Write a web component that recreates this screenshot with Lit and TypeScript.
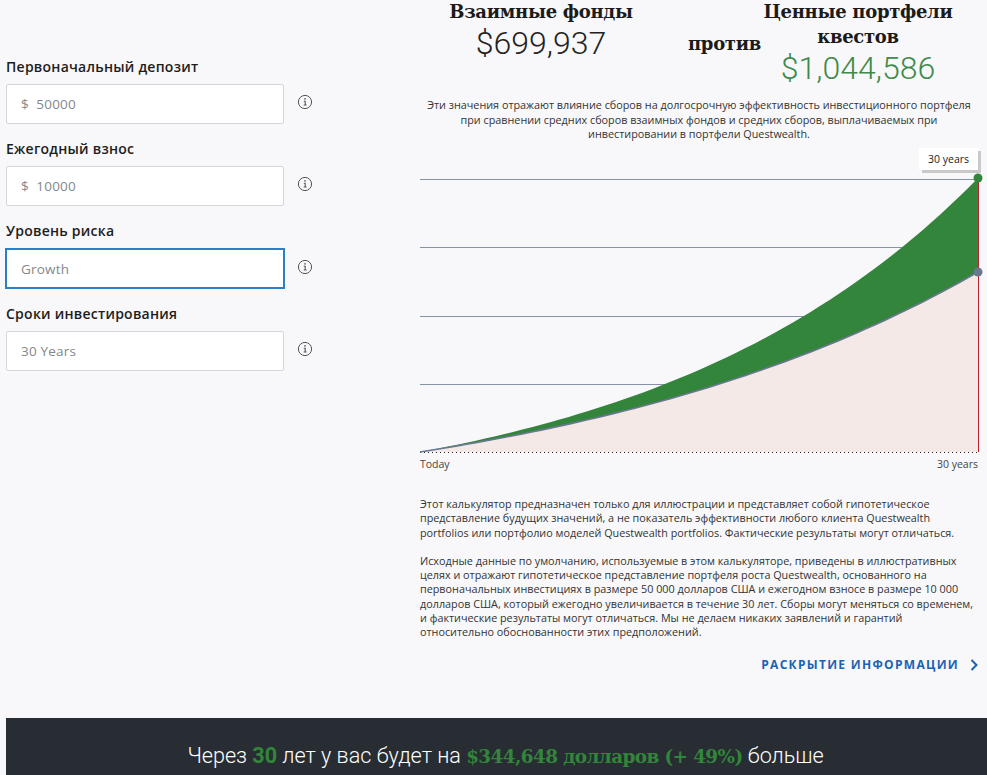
import { LitElement, html, css, svg } from "lit";
import { customElement } from "lit/decorators.js";

const X0 = 0, X1 = 558, BASE = 302;
function curve(height: number, k: number): [number, number][] {
  const pts: [number, number][] = [];
  for (let i = 0; i <= 60; i++) {
    const t = i / 60;
    pts.push([X0 + t * (X1 - X0), BASE - (height * (Math.exp(k * t) - 1)) / (Math.exp(k) - 1)]);
  }
  return pts;
}
const toStr = (p: [number, number][]) => p.map((q) => q[0].toFixed(1) + "," + q[1].toFixed(1)).join(" ");
const top = curve(274, 1.7);
const bottom = curve(180, 1.3);

const fields = [
  { label: "Первоначальный депозит", value: "$\u00a0 50000", focus: false },
  { label: "Ежегодный взнос", value: "$\u00a0 10000", focus: false },
  { label: "Уровень риска", value: "Growth", focus: true },
  { label: "Сроки инвестирования", value: "30 Years", focus: false },
];

@customElement("app-root")
export class AppRoot extends LitElement {
  static styles = css`
    :host { display: block; height: 775px; overflow: hidden; background: #f8f8fa; font-family: "Open Sans", sans-serif; color: #222; }
    .main { display: flex; height: 718px; padding-left: 6px; box-sizing: border-box; }
    .left { width: 414px; flex: none; padding-top: 57px; box-sizing: border-box; }
    .field { height: 82.2px; }
    .label { font-size: 14px; font-weight: 600; letter-spacing: 0.25px; line-height: 20px; height: 27px; color: #1d1d1d; }
    .row { display: flex; align-items: center; gap: 13px; }
    .input { width: 278px; height: 40px; box-sizing: border-box; background: #fff; border: 1px solid #d4d6da; border-radius: 2px; padding-left: 14px; display: flex; align-items: center; font-size: 13.5px; color: #84888c; letter-spacing: 0.2px; }
    .input.focus { border: 2px solid #2b7fc9; border-radius: 0; margin: 0 -1px; width: 280px; height: 41px; padding-left: 14px; }
    .row svg { flex: none; margin-top: -4px; }
    .right { flex: 1; min-width: 0; padding-right: 9px; display: flex; flex-direction: column; position: relative; }
    .head { display: grid; grid-template-columns: 282px 76px 200px; margin: -1px 0 0 -20px; height: 93px; text-align: center; }
    .h { font-family: "DejaVu Serif", serif; font-weight: 700; font-size: 18px; line-height: 25px; color: #1b1b1b; letter-spacing: -0.3px; }
    .vs { align-self: start; margin-top: 32px; margin-left: 6px; text-align: left; white-space: nowrap; }
    .num { font-family: Roboto, sans-serif; font-weight: 300; font-size: 32px; line-height: 38px; color: #222; }
    .num.green { color: #3f8a4a; }
    .note { font-size: 10.8px; line-height: 14.5px; text-align: center; color: #333; margin: 6px 0 0; height: 52px; }
    .chart { position: relative; height: 304px; }
    .chart svg { display: block; overflow: visible; }
    .tip { position: absolute; right: 0; top: -2px; width: 59px; height: 22px; background: #fff; box-shadow: 3px 3px 0 #c9c9c9; font-size: 10.5px; display: flex; align-items: center; justify-content: center; color: #222; }
    .axis { display: flex; justify-content: space-between; font-size: 10.5px; line-height: 14px; color: #444; margin-top: 3px; }
    .copy { font-size: 10.8px; line-height: 14.3px; color: #333; margin: 26px 0 0; }
    .copy + .copy { margin-top: 14px; }
    .link { align-self: flex-end; display: flex; align-items: center; gap: 11px; margin-top: 17px; font-size: 12px; font-weight: 700; letter-spacing: 1.3px; color: #1a62b5; line-height: 16px; }
    .foot { margin-left: 6px; height: 120px; background: #272d33; color: #fff; text-align: center; padding: 24px 0 0 18px; box-sizing: border-box; font-family: Roboto, sans-serif; font-weight: 300; font-size: 21.6px; line-height: 28px; }
    .foot b { color: #32853a; font-weight: 700; }
    .foot .slab { font-family: "DejaVu Serif", serif; font-size: 18.4px; letter-spacing: -0.6px; }
  `;

  private info() {
    return html`<svg width="16" height="16" viewBox="0 0 16 16" fill="none" stroke="#555" stroke-width="1">
      <circle cx="8" cy="8" r="6.6"></circle>
      <path d="M6.8 7.2H8.2V11M6.7 11H9.6" stroke-width="1.1"></path>
      <circle cx="8" cy="4.9" r="0.8" fill="#555" stroke="none"></circle>
    </svg>`;
  }

  private chart() {
    const area = "0," + BASE + " " + toStr(bottom) + " " + X1 + "," + BASE;
    const band = toStr(top) + " " + toStr([...bottom].reverse());
    return svg`
      ${[29.5, 97.5, 166.5, 234.5].map((y) => svg`<line x1="0" x2="558" y1=${y} y2=${y} stroke="#8593a8" stroke-width="1"></line>`)}
      <polygon points=${area} fill="#f4e9e6"></polygon>
      <line x1="0" x2="558" y1="302.5" y2="302.5" stroke="#222" stroke-width="1" stroke-dasharray="1 3"></line>
      <polygon points=${band} fill="#32853a"></polygon>
      <polyline points=${toStr(bottom)} fill="none" stroke="#6a7790" stroke-width="1.6"></polyline>
      <line x1="558.5" x2="558.5" y1="28" y2="302" stroke="#b8202c" stroke-width="1"></line>
      <circle cx="558" cy="28" r="4.5" fill="#32853a"></circle>
      <circle cx="558" cy="122" r="4.5" fill="#6a7790"></circle>
    `;
  }

  render() {
    return html`
      <div class="main">
        <div class="left">
          ${fields.map(
            (f) => html`<div class="field">
              <div class="label">${f.label}</div>
              <div class="row">
                <div class="input ${f.focus ? "focus" : ""}">${f.value}</div>
                ${this.info()}
              </div>
            </div>`
          )}
        </div>
        <div class="right">
          <div class="head">
            <div><div class="h">Взаимные фонды</div><div class="num">$699,937</div></div>
            <div class="h vs">против</div>
            <div><div class="h">Ценные портфели квестов</div><div class="num green">$1,044,586</div></div>
          </div>
          <p class="note">Эти значения отражают влияние сборов на долгосрочную эффективность инвестиционного портфеля<br />при сравнении средних сборов взаимных фондов и средних сборов, выплачиваемых при<br />инвестировании в портфели Questwealth.</p>
          <div class="chart">
            <svg width="558" height="304" viewBox="0 0 558 304">${this.chart()}</svg>
            <div class="tip">30 years</div>
          </div>
          <div class="axis"><span>Today</span><span>30 years</span></div>
          <p class="copy">Этот калькулятор предназначен только для иллюстрации и представляет собой гипотетическое<br />представление будущих значений, а не показатель эффективности любого клиента Questwealth<br />portfolios или портфолио моделей Questwealth portfolios. Фактические результаты могут отличаться.</p>
          <p class="copy">Исходные данные по умолчанию, используемые в этом калькуляторе, приведены в иллюстративных<br />целях и отражают гипотетическое представление портфеля роста Questwealth, основанного на<br />первоначальных инвестициях в размере 50 000 долларов США и ежегодном взносе в размере 10 000<br />долларов США, который ежегодно увеличивается в течение 30 лет. Сборы могут меняться со временем,<br />и фактические результаты могут отличаться. Мы не делаем никаких заявлений и гарантий<br />относительно обоснованности этих предположений.</p>
          <div class="link">РАСКРЫТИЕ ИНФОРМАЦИИ
            <svg width="8" height="12" viewBox="0 0 8 12" fill="none" stroke="#1a62b5" stroke-width="2"><path d="M1.5 1L6.5 6L1.5 11"></path></svg>
          </div>
        </div>
      </div>
      <div class="foot">Через <b>30</b> лет у вас будет на <b class="slab">$344,648 долларов (+ 49%)</b> больше</div>
    `;
  }
}
